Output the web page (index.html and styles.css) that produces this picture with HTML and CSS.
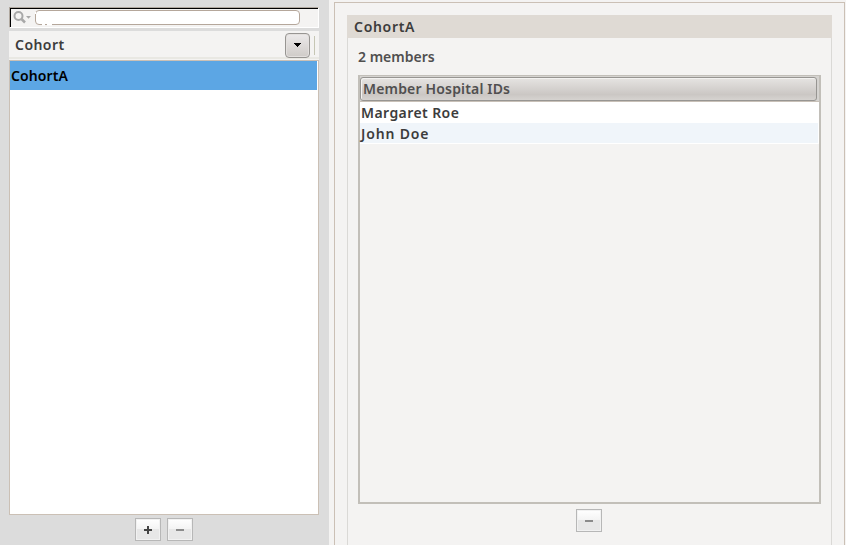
FILE: index.html
```html
<!DOCTYPE html>
<html lang="en">
<head>
<meta charset="utf-8">
<title>Cohorts</title>
<link rel="stylesheet" href="styles.css">
</head>
<body>
<div class="app">
  <aside class="sidebar">
    <div class="search">
      <svg class="search-icon" width="20" height="16" viewBox="0 0 20 16"><circle cx="5.5" cy="5" r="4" fill="none" stroke="#a8a8a8" stroke-width="2"/><path d="M8.5 8L12 11.5" stroke="#a8a8a8" stroke-width="2.5"/><path d="M13 5h5l-2.5 2.8z" fill="#a8a8a8"/></svg>
      <svg class="field" width="265" height="16"><rect x=".5" y=".5" width="264" height="14" rx="3.5" fill="#fff" stroke="#b5a79b"/><path d="M0 2v2M7 14.5h3M12 14.5h5" stroke="#fff" stroke-width="2"/></svg>
    </div>
    <div class="column-head">
      <span class="t-cohort">Cohort</span>
      <button class="drop" aria-label="Columns"><svg width="7" height="5" viewBox="0 0 7 5" shape-rendering="crispEdges"><path d="M0 0h7v1H6v1H5v1H4v1H3V3H2V2H1V1H0z" fill="#000"/></svg></button>
      <i class="divider"></i>
    </div>
    <div class="list"><div class="selected"><span class="t-selected">CohortA</span></div></div>
    <div class="actions">
      <button class="small" aria-label="Add"><svg width="8" height="8"><path d="M0 3h8v2H0zM3 0h2v8H3z" fill="#444"/></svg></button>
      <button class="small" aria-label="Remove"><svg width="8" height="8"><path d="M0 3h8v2H0z" fill="#8b8b8b"/></svg></button>
    </div>
  </aside>
  <main class="content">
    <section class="panel">
      <div class="card">
        <h1><span class="t-title">CohortA</span></h1>
        <div class="card-body">
          <p><span class="t-count">2 members</span></p>
          <div class="table">
            <div class="table-head"><div class="head-cell"><span class="t-ids">Member Hospital IDs</span></div></div>
            <div class="row"><span class="t-margaret">Margaret Roe</span></div>
            <div class="row alt"><span class="t-john">John Doe</span></div>
          </div>
          <div class="remove"><button class="small" aria-label="Remove member"><svg width="8" height="8"><path d="M0 3h8v2H0z" fill="#8b8b8b"/></svg></button></div>
        </div>
      </div>
    </section>
  </main>
</div>
</body>
</html>
```
FILE: styles.css
```css
* { box-sizing: border-box; }
body { margin: 0; overflow: hidden; font: 600 14px/20px "Noto Sans", "Open Sans", sans-serif; color: #3c3c3c; }
span { white-space: nowrap; }
button { padding: 0; font: inherit; display: flex; align-items: center; justify-content: center; }
.app { display: flex; width: 846px; height: 545px; }
.sidebar { width: 329px; padding: 7px 10px 0 9px; background: #dcdcdc; }
.search { display: flex; height: 21px; background: #f4f3f2; border: 1px solid #fff; border-top-color: #b0a89f; border-left-color: #b0a89f; box-shadow: inset 1px 1px #000; padding: 2px 0 0 3px; }
.search-icon { display: block; margin-top: 1px; }
.field { display: block; margin-left: 2px; }
.column-head { display: flex; align-items: center; height: 29px; margin-top: 3px; padding-left: 6px; background: linear-gradient(#f4f3f2 26px, #e9e8e3 26px, #e9e8e3 28px, #f4f3f2 28px); }
.drop { width: 25px; height: 25px; margin-left: auto; border: 1px solid #979592; border-radius: 4px; background: linear-gradient(#eceaea, #cfcbc8); box-shadow: inset 0 0 0 1px #e3e0de; }
.divider { width: 1px; height: 19px; margin: 0 4px; background: #c6c6b4; }
.list { height: 455px; background: #fff; border: 1px solid #cbc0b5; }
.selected { height: 29px; width: 307px; padding: 5px 0 0 1px; background: #5ca6e4; color: #000; }
.actions { display: flex; gap: 6px; padding: 3px 0 0 126px; }
.small { width: 26px; height: 23px; border: 1px solid #b7b7b7; border-radius: 0; background: linear-gradient(#fff, #f3f3f3 50%, #e7e7e7 50%); box-shadow: inset 0 0 0 1px #f1f1f1; }
.content { flex: 1; padding: 2px 1px 0 5px; background: #f4f3f2; }
.panel { height: 543px; border: 1px solid #cbc0b5; border-bottom: 0; padding: 12px 12px 0; }
.card { height: 530px; }
h1 { margin: 0; height: 23px; padding: 2px 7px; background: #dfdad4; font: inherit; }
.card-body { height: 507px; border: solid #dad9d6; border-width: 0 1px; padding: 9px 10px 0; }
p { margin: 0; height: 28px; color: #504f4f; }
.table { height: 429px; border: 2px solid #c2bfb9; border-top-width: 1px; }
.table-head { height: 26px; padding: 1px 2px 0 0; border-bottom: 1px solid #c8c0b7; background: #d5d3d0; }
.head-cell { height: 24px; padding: 1px 2px; border: 1px solid #979592; border-radius: 3px; background: linear-gradient(#e6e4e2, #cbc7c4 75%, #d6d3d0); box-shadow: inset 1px 1px #f3f2f1; color: #504f4f; }
.row { height: 21px; background: #fff; padding: 1px 0 0 1px; }
.alt { border-right: 1px solid #fff; border-bottom: 1px solid #fff; background: #f0f5fa; }
.remove { display: flex; justify-content: center; padding: 5px 2px 0 0; }
.t-cohort { letter-spacing: .45px; margin-top: -2px; }
.t-selected { letter-spacing: .1px; }
.t-title { letter-spacing: .7px; }
.t-ids { letter-spacing: .17px; }
.t-margaret { letter-spacing: .42px; }
.t-john { letter-spacing: .85px; }
```
